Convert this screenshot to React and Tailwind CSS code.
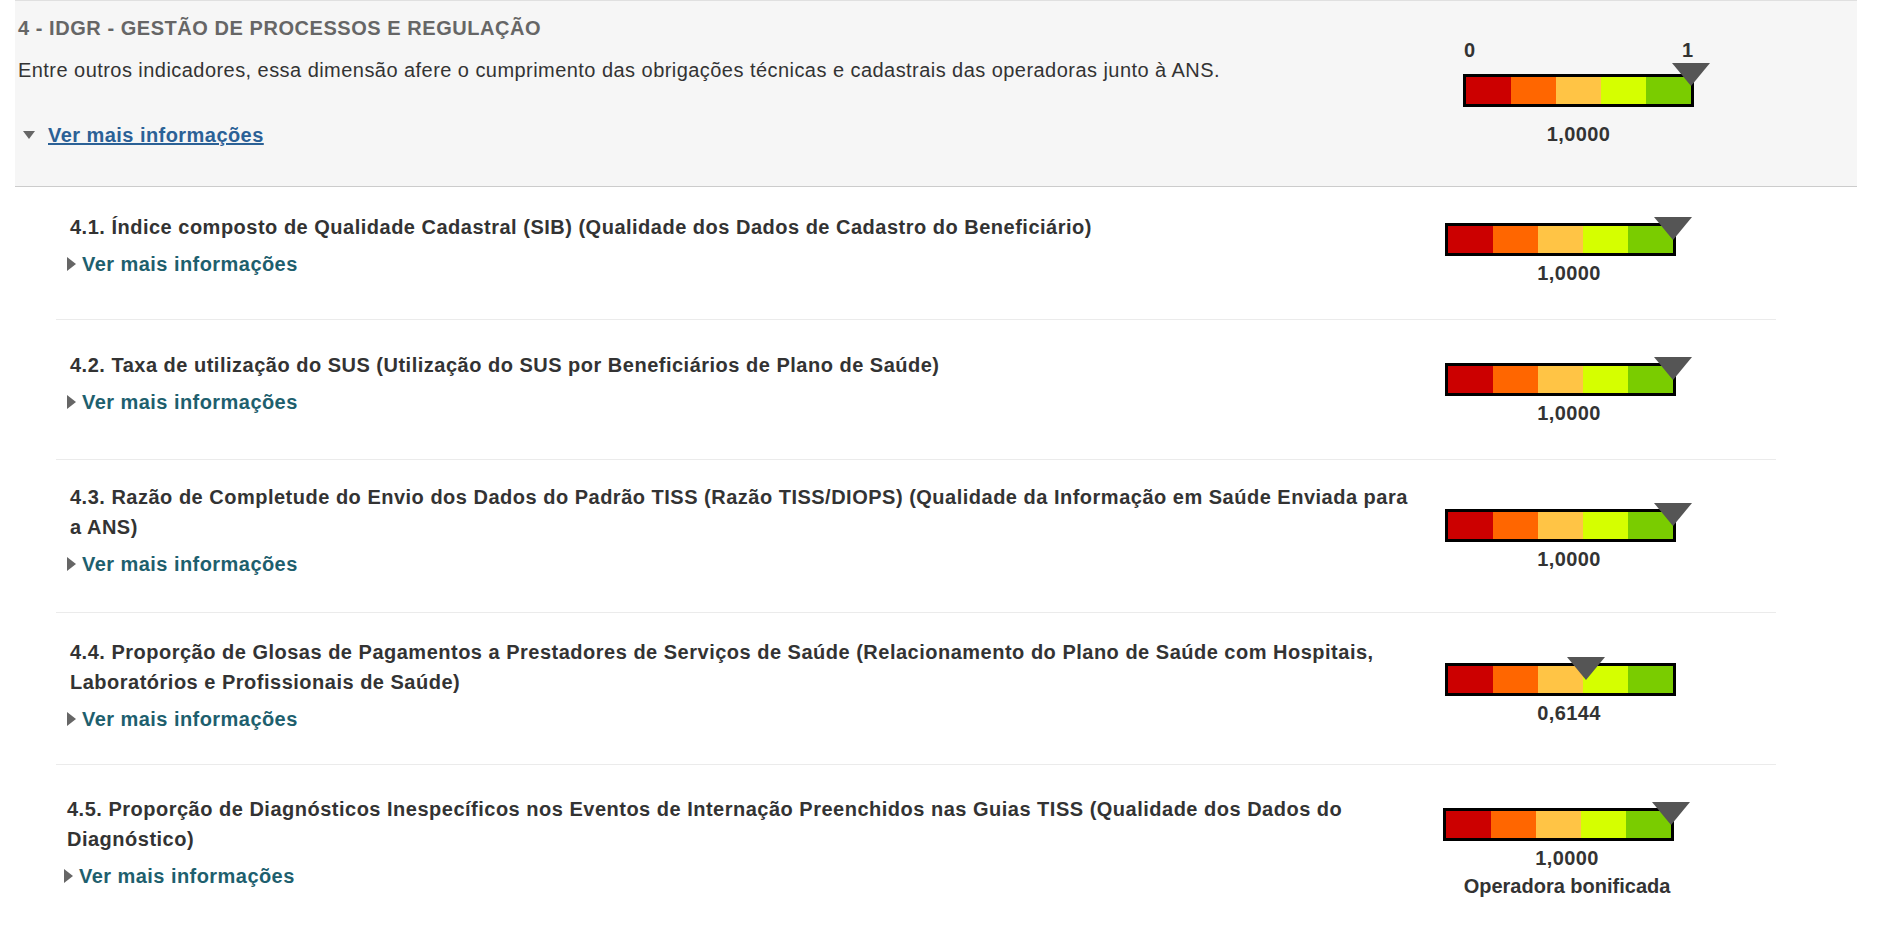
const indicadores = [
  {
    id: '4.1.',
    titulo: 'Índice composto de Qualidade Cadastral (SIB) (Qualidade dos Dados de Cadastro do Beneficiário)',
    valor: 1,
    pad: 'pt-[25px] pb-[41px] pl-[14px]',
    gauge: 'mt-[36px]',
  },
  {
    id: '4.2.',
    titulo: 'Taxa de utilização do SUS (Utilização do SUS por Beneficiários de Plano de Saúde)',
    valor: 1,
    pad: 'pt-[30px] pb-[43px] pl-[14px]',
    gauge: 'mt-[43px]',
  },
  {
    id: '4.3.',
    titulo: 'Razão de Completude do Envio dos Dados do Padrão TISS (Razão TISS/DIOPS) (Qualidade da Informação em Saúde Enviada para a ANS)',
    valor: 1,
    pad: 'pt-[22px] pb-[34px] pl-[14px]',
    gauge: 'mt-[49px]',
  },
  {
    id: '4.4.',
    titulo: 'Proporção de Glosas de Pagamentos a Prestadores de Serviços de Saúde (Relacionamento do Plano de Saúde com Hospitais, Laboratórios e Profissionais de Saúde)',
    valor: 0.6144,
    pad: 'pt-[24px] pb-[31px] pl-[14px]',
    gauge: 'mt-[50px]',
  },
  {
    id: '4.5.',
    titulo: 'Proporção de Diagnósticos Inespecíficos nos Eventos de Internação Preenchidos nas Guias TISS (Qualidade dos Dados do Diagnóstico)',
    valor: 1,
    nota: 'Operadora bonificada',
    pad: 'pt-[29px] pb-[35px] pl-[11px]',
    gauge: 'mt-[43px] -ml-[2px]',
  },
];

const faixas = ['bg-[#cc0000]', 'bg-[#ff6600]', 'bg-[#ffc445]', 'bg-[#d5ff00]', 'bg-[#7acc00]'];

function fmt(v) {
  return v.toFixed(4).replace('.', ',');
}

function Barra({ valor, seta }) {
  return (
    <div className="relative flex w-[231px] h-[33px] border-[3px] border-black">
      {faixas.map((c) => (
        <div key={c} className={`flex-1 ${c}`} />
      ))}
      <span
        className={`absolute w-0 h-0 border-l-[19px] border-r-[19px] border-t-[23px] border-l-transparent border-r-transparent border-t-[#555555] ${seta}`}
        style={{ left: `calc(${valor * 100}% - 19px)` }}
      />
    </div>
  );
}

export default function App() {
  return (
    <div className="min-h-screen bg-white text-[#333] font-['Liberation_Sans',Arial,sans-serif]">
      <div className="ml-[15px] w-[1842px] bg-[#f6f6f6] border-t border-b border-t-[#e0e0e0] border-b-[#cccccc] flex items-start">
        <div className="w-[1448px] pl-[3px] pt-[15px] pb-[39px]">
          <h2 className="text-[20px] leading-[24px] font-bold text-[#666] tracking-[0.55px]">
            4 - IDGR - GESTÃO DE PROCESSOS E REGULAÇÃO
          </h2>
          <p className="mt-[18px] text-[20px] leading-[24px] tracking-[0.45px]">
            Entre outros indicadores, essa dimensão afere o cumprimento das obrigações técnicas e cadastrais das operadoras junto à ANS.
          </p>
          <div className="mt-[41px] flex items-center">
            <span className="ml-[5px] mr-[13px] w-0 h-0 border-l-[6px] border-r-[6px] border-t-[8px] border-l-transparent border-r-transparent border-t-[#666]" />
            <a href="#" className="text-[20px] leading-[24px] font-bold text-[#2b6196] underline tracking-[0.45px]">
              Ver mais informações
            </a>
          </div>
        </div>
        <div className="w-[231px] pt-[38px] text-center font-bold">
          <div className="flex justify-between px-[1px] text-[20px] leading-[22px] mb-[13px]">
            <span>0</span>
            <span>1</span>
          </div>
          <Barra valor={1} seta="-top-[14px]" />
          <div className="mt-[16px] text-[20px] leading-[22px] tracking-[0.4px]">{fmt(1)}</div>
        </div>
      </div>

      <div className="ml-[56px] w-[1720px]">
        {indicadores.map((it, i) => (
          <div
            key={it.id}
            className={`flex items-start ${i < indicadores.length - 1 ? 'border-b border-[#ebebeb]' : ''}`}
          >
            <div className={`w-[1389px] pr-[32px] ${it.pad}`}>
              <div className="text-[20px] leading-[30px] font-bold text-[#333] tracking-[0.5px]">
                {it.id} {it.titulo}
              </div>
              <div className="mt-[8px] flex items-center">
                <span className="-ml-[3px] mr-[6px] w-0 h-0 border-t-[7px] border-b-[7px] border-l-[9px] border-t-transparent border-b-transparent border-l-[#666]" />
                <a href="#" className="text-[20px] leading-[28px] font-bold text-[#1e5f6e] tracking-[0.45px]">
                  Ver mais informações
                </a>
              </div>
            </div>
            <div className={`w-[248px] text-center font-bold ${it.gauge}`}>
              <Barra valor={it.valor} seta="-top-[9px]" />
              <div className="mt-[6px] text-[20px] leading-[22px] tracking-[0.4px]">{fmt(it.valor)}</div>
              {it.nota && <div className="mt-[6px] text-[20px] leading-[22px]">{it.nota}</div>}
            </div>
          </div>
        ))}
      </div>
    </div>
  );
}
